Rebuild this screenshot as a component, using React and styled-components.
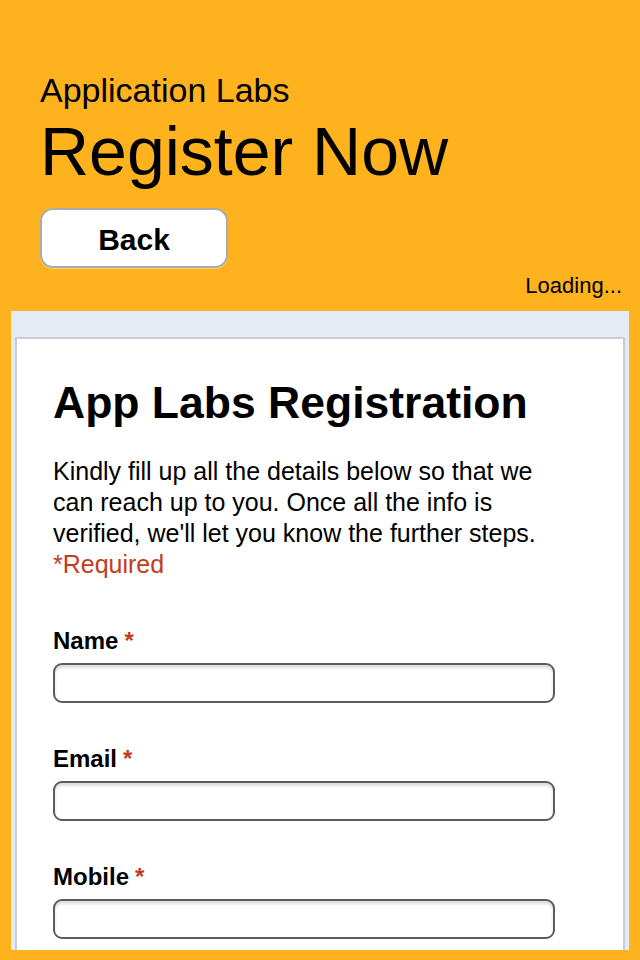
import React from "react";
import styled, { createGlobalStyle } from "styled-components";

const Global = createGlobalStyle`
  html, body {
    margin: 0;
    padding: 0;
    background: #feb31e;
  }
  body {
    font-family: "Liberation Sans", Arial, Helvetica, sans-serif;
    color: #000;
  }
  * { box-sizing: border-box; }
`;

const Page = styled.div`
  display: flex;
  flex-direction: column;
  width: 640px;
  height: 960px;
  overflow: hidden;
  background: #feb31e;
`;

const Header = styled.header`
  display: flex;
  flex-direction: column;
  padding: 70px 18px 0 40px;
`;

const Brand = styled.div`
  font-size: 34px;
  line-height: 40px;
  font-weight: 400;
`;

const Heading = styled.h1`
  margin: 3px 0 0;
  font-size: 68px;
  line-height: 76px;
  font-weight: 400;
`;

const BackButton = styled.button`
  display: flex;
  align-items: center;
  justify-content: center;
  margin-top: 19px;
  width: 188px;
  height: 60px;
  padding: 3px 0 0;
  background: #fff;
  border: 2px solid #ababab;
  border-radius: 13px;
  font-family: "Liberation Sans", Arial, sans-serif;
  font-size: 30px;
  font-weight: 700;
  color: #000;
  box-shadow: 0 1px 0 rgba(255, 255, 255, 0.4);
`;

const Status = styled.div`
  align-self: flex-end;
  margin-top: 5px;
  font-size: 22px;
  line-height: 26px;
`;

const Frame = styled.div`
  margin: 12px 11px 10px 11px;
  height: 639px;
  overflow: hidden;
  background: #e5ebf5;
  padding: 26px 4px 0 4px;
`;

const Card = styled.section`
  background: #fff;
  border: 2px solid #c9cdd3;
  border-bottom: none;
  min-height: 700px;
  padding: 38px 36px 0 36px;
`;

const Content = styled.div`
  width: 502px;
`;

const Title = styled.h2`
  margin: 0;
  font-size: 44.5px;
  line-height: 52px;
  font-weight: 700;
  white-space: nowrap;
`;

const Intro = styled.p`
  margin: 27px 0 0;
  font-size: 25px;
  line-height: 31px;
`;

const RequiredNote = styled.div`
  font-size: 25px;
  line-height: 31px;
  color: #c43b1d;
`;

const Fields = styled.div`
  display: flex;
  flex-direction: column;
  gap: 42px;
  margin-top: 47px;
`;

const Field = styled.div`
  display: flex;
  flex-direction: column;
  gap: 8px;
`;

const Label = styled.label`
  font-size: 24px;
  line-height: 28px;
  font-weight: 700;
`;

const Star = styled.span`
  color: #c43b1d;
  font-weight: 700;
  margin-left: 6px;
`;

const Input = styled.input`
  width: 502px;
  height: 40px;
  border: 2px solid #5c5c5c;
  border-radius: 9px;
  background: #fff;
  box-shadow: inset 0 3px 3px rgba(0, 0, 0, 0.13);
  font-family: "Liberation Sans", Arial, sans-serif;
  font-size: 22px;
  padding: 0 8px;
  outline: none;
`;

const fields = ["Name", "Email", "Mobile"];

export default function App() {
  return (
    <Page>
      <Global />
      <Header>
        <Brand>Application Labs</Brand>
        <Heading>Register Now</Heading>
        <BackButton type="button">Back</BackButton>
        <Status>Loading...</Status>
      </Header>
      <Frame>
        <Card>
          <Content>
            <Title>App Labs Registration</Title>
            <Intro>
              Kindly fill up all the details below so that we can reach up to
              you. Once all the info is verified, we'll let you know the further
              steps.
              <RequiredNote>*Required</RequiredNote>
            </Intro>
            <Fields>
              {fields.map((f) => (
                <Field key={f}>
                  <Label>
                    {f}
                    <Star>*</Star>
                  </Label>
                  <Input type="text" />
                </Field>
              ))}
            </Fields>
          </Content>
        </Card>
      </Frame>
    </Page>
  );
}
